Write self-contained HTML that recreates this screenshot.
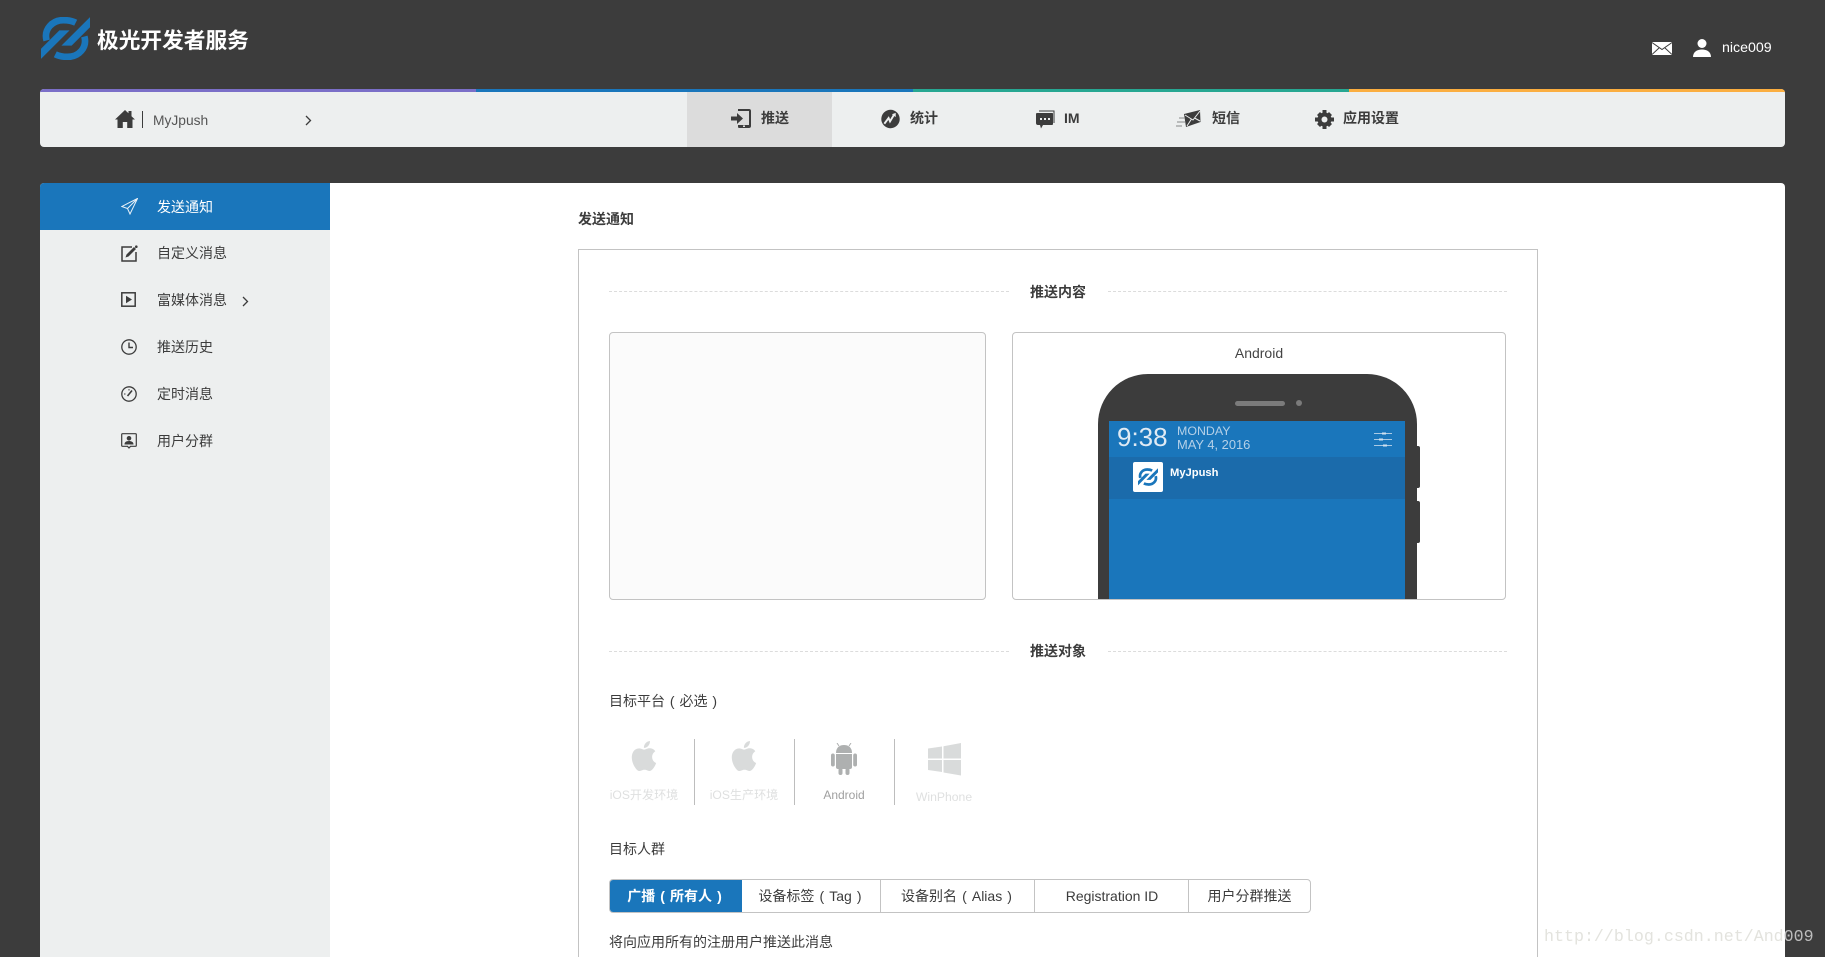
<!DOCTYPE html>
<html lang="zh">
<head>
<meta charset="utf-8">
<title>极光开发者服务</title>
<style>
*{box-sizing:border-box;margin:0;padding:0}
html,body{width:1825px;height:957px;overflow:hidden;background:#3c3c3c}
body{position:relative;font-family:"Liberation Sans","Noto Sans CJK SC",sans-serif;font-size:14px;color:#3c3c3c}
.a{position:absolute;white-space:nowrap}
.t{position:absolute;white-space:nowrap;line-height:20px;height:20px}
svg{position:absolute;display:block}
.m{font-weight:700}
.c{text-align:center}
.seg{position:absolute;top:0;height:100%;display:flex;align-items:center;justify-content:center;white-space:pre;border-left:1px solid #c3c3c3;word-spacing:1.200px}
</style>
</head>
<body>
<svg width="0" height="0" style="position:absolute">
<symbol id="logo" viewBox="0 0 48 42">
<path d="M0 41V31L18 13H28Z"/><path d="M48 0V10L30 28H20Z"/>
<path d="M5.500 23C2.500 12 11 3 22 3C27 3 31 4 34 5.500" fill="none" stroke="currentColor" stroke-width="6.500"/>
<path d="M42.500 19C45.500 30 37 39 26 39C21 39 17 38 14 36.500" fill="none" stroke="currentColor" stroke-width="6.500"/>
</symbol>
</svg>

<!-- header -->
<svg style="left:41px;top:17px;color:#1a76bb;fill:#1a76bb" width="49" height="43"><use href="#logo"/></svg>
<div class="t" style="left:97px;top:27px;height:26px;line-height:27px;font-size:21.700px;font-weight:700;color:#fff">极光开发者服务</div>

<svg style="left:1652px;top:42px" width="20" height="13" viewBox="0 0 20 13"><path fill="#fff" d="M0 0H20V13H0Z"/><path d="M0 .5L10 7.500L20 .5M0 12.500L7 6M20 12.500L13 6" fill="none" stroke="#3c3c3c" stroke-width="1"/></svg>
<svg style="left:1693px;top:39px" width="18" height="18" viewBox="0 0 18 18"><circle cx="9" cy="4.500" r="4.500" fill="#fff"/><path fill="#fff" d="M0 18C0 13 4 10.500 9 10.500S18 13 18 18Z"/></svg>
<div class="t" style="left:1722px;top:38px;color:#fff;font-size:14.200px">nice009</div>

<!-- top nav -->
<div class="a" style="left:40px;top:89px;width:1745px;height:58px;background:#edefef;border-radius:4px;overflow:hidden">
  <div class="a" style="left:0;top:0;width:436px;height:3px;background:#7b6fc8"></div>
  <div class="a" style="left:436px;top:0;width:437px;height:3px;background:#1a76bb"></div>
  <div class="a" style="left:873px;top:0;width:436px;height:3px;background:#27a792"></div>
  <div class="a" style="left:1309px;top:0;width:436px;height:3px;background:#fbae40"></div>
  <div class="a" style="left:647px;top:3px;width:145px;height:55px;background:#dcdcdc"></div>
</div>
<svg style="left:115px;top:110px" width="20" height="18" viewBox="0 0 20 18"><path fill="#3c3c3c" d="M10 0L13.500 3.300V1H16.500V6.200L20 9.500H17.500V18H12.200V12H7.800V18H2.500V9.500H0Z"/></svg>
<div class="a" style="left:142px;top:111px;width:1px;height:17px;background:#3c3c3c"></div>
<div class="t" style="left:153px;top:111px;color:#555;font-size:13.800px">MyJpush</div>
<svg style="left:305px;top:115px" width="7" height="11" viewBox="0 0 7 11"><path d="M1 1L5.500 5.500L1 10" fill="none" stroke="#3c3c3c" stroke-width="1.300"/></svg>

<svg style="left:731px;top:109px" width="20" height="20" viewBox="0 0 20 20"><path fill="#3c3c3c" d="M7 0H18Q20 0 20 2V17Q20 19 18 19H8Q7 19 7 17.500V16H9V16H18V2H7Z"/><rect x="12" y="16.500" width="2" height="1.500" fill="#dcdcdc"/><path fill="#3c3c3c" d="M0 7.500H6V4L12 9.500L6 15V11.500H0Z"/></svg>
<div class="t m" style="left:761px;top:108px">推送</div>

<svg style="left:881px;top:109px" width="19" height="20" viewBox="0 0 20 20"><circle cx="10" cy="10" r="9.700" fill="#3c3c3c"/><path d="M3.500 15L8 9L9.500 12.500L14 5" fill="none" stroke="#edefef" stroke-width="2"/><path fill="#edefef" d="M11.500 5L15.500 3.500L15.500 8Z"/></svg>
<div class="t m" style="left:910px;top:108px">统计</div>

<svg style="left:1036px;top:110px" width="19" height="19" viewBox="0 0 19 19"><path d="M3 1H18V13" fill="none" stroke="#3c3c3c" stroke-width="1"/><path fill="#3c3c3c" d="M1 3H16.500Q17 3 17 4V14Q17 15 16 15H7L5 18.500L4 15H2Q0 15 0 13V4Q0 3 1 3Z"/><path d="M4 9H6M8 9H10M12 9H14" stroke="#edefef" stroke-width="2"/></svg>
<div class="t m" style="left:1064px;top:108px">IM</div>

<svg style="left:1176px;top:110px" width="25" height="18" viewBox="0 0 25 18"><path fill="#3c3c3c" d="M8 4L24 0L24.500 12L10 17Z"/><path d="M9 5L17 10L24 1M11 16L15.500 9M24 11L18.500 8" fill="none" stroke="#edefef" stroke-width="1"/><path d="M3 8H9M1 12H9M0 16H6" fill="none" stroke="#888" stroke-width="1"/></svg>
<div class="t m" style="left:1212px;top:108px">短信</div>

<svg style="left:1315px;top:110px" width="19" height="19" viewBox="0 0 19 19"><g fill="#3c3c3c"><circle cx="9.500" cy="9.500" r="7"/><path d="M7.500 0H11.500V4H7.500ZM7.500 15H11.500V19H7.500ZM0 7.500H4V11.500H0ZM15 7.500H19V11.500H15Z"/><path d="M2 5L5 2L8 5L5 8ZM11 14L14 11L17 14L14 17ZM14 2L17 5L14 8L11 5ZM5 11L8 14L5 17L2 14Z"/></g><circle cx="9.500" cy="9.500" r="3" fill="#edefef"/></svg>
<div class="t m" style="left:1343px;top:108px">应用设置</div>

<!-- sidebar -->
<div class="a" style="left:40px;top:183px;width:290px;height:774px;background:#edefef;border-top-left-radius:4px;overflow:hidden">
  <div class="a" style="left:0;top:0;width:290px;height:47px;background:#1a76bb"></div>
</div>
<svg style="left:121px;top:198px" width="17" height="17" viewBox="0 0 17 17"><path d="M16.500 .5L.8 8.500L6.500 10.500L9 16L16.500 .5ZM6.500 10.500L16.500 .5" fill="none" stroke="#e8f1f8" stroke-width="1"/></svg>
<div class="t" style="left:157px;top:197px;color:#fff">发送通知</div>

<svg style="left:121px;top:245px" width="17" height="17" viewBox="0 0 17 17"><path d="M11 2H1V16H15V7" fill="none" stroke="#3c3c3c" stroke-width="1.500"/><path fill="#3c3c3c" d="M4.500 12.500L5.500 9.500L13 2L15 4L7.500 11.500Z"/><circle cx="15.300" cy="1.700" r="1.300" fill="#3c3c3c"/></svg>
<div class="t" style="left:157px;top:243px">自定义消息</div>

<svg style="left:121px;top:292px" width="15" height="15" viewBox="0 0 15 15"><rect x=".8" y=".8" width="13.400" height="13.400" fill="none" stroke="#3c3c3c" stroke-width="1.500"/><path fill="#3c3c3c" d="M5 3.800L11 7.500L5 11.200Z"/></svg>
<div class="t" style="left:157px;top:290px">富媒体消息</div>
<svg style="left:242px;top:296px" width="7" height="11" viewBox="0 0 7 11"><path d="M1 1L5.500 5.500L1 10" fill="none" stroke="#3c3c3c" stroke-width="1.300"/></svg>

<svg style="left:121px;top:339px" width="16" height="16" viewBox="0 0 16 16"><circle cx="8" cy="8" r="7.200" fill="none" stroke="#3c3c3c" stroke-width="1.300"/><path d="M8 3.500V8.500H12" fill="none" stroke="#3c3c3c" stroke-width="1.400"/></svg>
<div class="t" style="left:157px;top:337px">推送历史</div>

<svg style="left:121px;top:386px" width="16" height="16" viewBox="0 0 16 16"><circle cx="8" cy="8" r="7.200" fill="none" stroke="#3c3c3c" stroke-width="1.300"/><path d="M6.500 10L11 4.500" fill="none" stroke="#3c3c3c" stroke-width="1.600"/><path d="M3 8H4.500M8 3V4.500" stroke="#3c3c3c" stroke-width="1"/></svg>
<div class="t" style="left:157px;top:384px">定时消息</div>

<svg style="left:121px;top:433px" width="16" height="16" viewBox="0 0 16 16"><path d="M1.500 .7H14.500Q15.300 .7 15.300 1.500V12.500Q15.300 13.300 14.500 13.300H9.500L8 15L6.500 13.300H1.500Q.7 13.300 .7 12.500V1.500Q.7 .7 1.500 .7Z" fill="none" stroke="#3c3c3c" stroke-width="1.200"/><circle cx="8" cy="5.300" r="2.300" fill="#3c3c3c"/><path fill="#3c3c3c" d="M3.500 11.500C3.500 9 5.500 8 8 8S12.500 9 12.500 11.500Z"/></svg>
<div class="t" style="left:157px;top:431px">用户分群</div>

<!-- main -->
<div class="a" style="left:330px;top:183px;width:1455px;height:774px;background:#fff;border-top-right-radius:4px"></div>
<div class="t m" style="left:578px;top:209px">发送通知</div>
<div class="a" style="left:578px;top:249px;width:960px;height:720px;border:1px solid #c3c3c3"></div>

<div class="a" style="left:609px;top:291px;width:400px;border-top:1px dashed #dcdcdc"></div>
<div class="a" style="left:1108px;top:291px;width:399px;border-top:1px dashed #dcdcdc"></div>
<div class="t m" style="left:1030px;top:282px">推送内容</div>

<div class="a" style="left:609px;top:332px;width:377px;height:268px;background:#fbfbfb;border:1px solid #c3c3c3;border-radius:4px"></div>
<div class="a" style="left:1012px;top:332px;width:494px;height:268px;background:#fff;border:1px solid #c3c3c3;border-radius:4px"></div>
<div class="t c" style="left:1012px;width:494px;top:343px;color:#444">Android</div>

<!-- phone -->
<div class="a" style="left:1098px;top:374px;width:319px;height:225px;background:#3c3c3c;border-radius:50px 50px 0 0"></div>
<div class="a" style="left:1417px;top:446px;width:3px;height:42px;background:#3c3c3c;border-radius:0 2px 2px 0"></div>
<div class="a" style="left:1417px;top:501px;width:3px;height:42px;background:#3c3c3c;border-radius:0 2px 2px 0"></div>
<div class="a" style="left:1235px;top:401px;width:50px;height:5px;background:#7b7b7b;border-radius:3px"></div>
<div class="a" style="left:1296px;top:400px;width:6px;height:6px;background:#7b7b7b;border-radius:50%"></div>
<div class="a" style="left:1109px;top:421px;width:296px;height:178px;background:#1a76bb"></div>
<div class="a" style="left:1109px;top:457px;width:296px;height:42px;background:#1b6bab"></div>
<div class="a" style="left:1117px;top:422px;line-height:30px;font-size:26px;color:#dfeaf4">9:38</div>
<div class="a" style="left:1177px;top:423px;line-height:16px;font-size:12.400px;color:#b4d0e8">MONDAY</div>
<div class="a" style="left:1177px;top:437px;line-height:16px;font-size:12.900px;color:#b4d0e8">MAY 4, 2016</div>
<svg style="left:1374px;top:431px" width="18" height="16" viewBox="0 0 18 16"><path d="M0 2.500H18M0 8.500H18M0 14.500H18" stroke="#cfe0ef" stroke-width="1" opacity=".8"/><path d="M8 1.500H12V3.500H8ZM5 7.500H9V9.500H5ZM9 13.500H13V15.500H9Z" fill="#cfe0ef"/></svg>
<div class="a" style="left:1133px;top:462px;width:30px;height:30px;background:#fff;border-radius:2px"></div>
<svg style="left:1138px;top:468px;color:#1a76bb;fill:#1a76bb" width="20" height="18"><use href="#logo"/></svg>
<div class="a" style="left:1170px;top:466px;line-height:15px;font-size:11.200px;font-weight:700;color:#fff">MyJpush</div>

<div class="a" style="left:609px;top:651px;width:400px;border-top:1px dashed #dcdcdc"></div>
<div class="a" style="left:1108px;top:651px;width:399px;border-top:1px dashed #dcdcdc"></div>
<div class="t m" style="left:1030px;top:641px">推送对象</div>

<div class="t" style="left:609px;top:691px;word-spacing:1px">目标平台 ( 必选 )</div>

<!-- platforms -->
<div class="a" style="left:694px;top:739px;width:1px;height:66px;background:#bdbdbd"></div>
<div class="a" style="left:794px;top:739px;width:1px;height:66px;background:#bdbdbd"></div>
<div class="a" style="left:894px;top:739px;width:1px;height:66px;background:#bdbdbd"></div>
<svg style="left:626px;top:738px" width="36" height="36" viewBox="0 0 24 24"><path fill="#d9dbdb" d="M18.700 19.500c-.83 1.240-1.710 2.450-3.050 2.470-1.340.03-1.770-.79-3.290-.79-1.530 0-2 .77-3.270.82-1.310.05-2.300-1.320-3.140-2.530C4.250 17 2.940 12.450 4.700 9.390c.87-1.520 2.430-2.480 4.120-2.510 1.280-.02 2.500.87 3.290.87.78 0 2.260-1.070 3.810-.91.65.03 2.470.26 3.640 1.980-.09.06-2.170 1.280-2.150 3.810.03 3.020 2.650 4.030 2.680 4.040-.03.07-.42 1.440-1.380 2.830M13 3.500c.73-.83 1.940-1.460 2.940-1.500.13 1.170-.34 2.350-1.040 3.190-.69.85-1.830 1.510-2.950 1.420-.15-1.150.41-2.350 1.050-3.110z"/></svg>
<svg style="left:726px;top:738px" width="36" height="36" viewBox="0 0 24 24"><path fill="#d9dbdb" d="M18.700 19.500c-.83 1.240-1.710 2.450-3.050 2.470-1.340.03-1.770-.79-3.290-.79-1.530 0-2 .77-3.270.82-1.310.05-2.300-1.320-3.140-2.530C4.250 17 2.940 12.450 4.700 9.390c.87-1.520 2.430-2.480 4.120-2.510 1.280-.02 2.500.87 3.290.87.78 0 2.260-1.070 3.810-.91.65.03 2.470.26 3.640 1.980-.09.06-2.170 1.280-2.150 3.810.03 3.020 2.650 4.030 2.680 4.040-.03.07-.42 1.440-1.380 2.830M13 3.500c.73-.83 1.940-1.460 2.940-1.500.13 1.170-.34 2.350-1.040 3.190-.69.85-1.830 1.510-2.950 1.420-.15-1.150.41-2.350 1.050-3.110z"/></svg>
<svg style="left:831px;top:743px" width="26" height="32" viewBox="0 0 26 32"><g fill="#aeb0b0"><path d="M5 10C5 4 9 2 13 2S21 4 21 10Z"/><path d="M5 11H21V24Q21 26 19 26H7Q5 26 5 24Z"/><rect x="0" y="10.500" width="3.800" height="13" rx="1.900"/><rect x="22.200" y="10.500" width="3.800" height="13" rx="1.900"/><rect x="7.500" y="25" width="4" height="7" rx="2"/><rect x="14.500" y="25" width="4" height="7" rx="2"/></g><path d="M8 3L6 0M18 3L20 0" stroke="#aeb0b0" stroke-width="1"/></svg>
<svg style="left:928px;top:743px" width="33" height="33" viewBox="0 0 33 33"><path fill="#d9dbdb" d="M0 5.500L14 3.500V15.500H0ZM15.500 3.200L33 0V15.500H15.500ZM0 17H14V29L0 27ZM15.500 17H33V32.500L15.500 29.500Z"/></svg>
<div class="t c" style="left:601px;width:86px;top:785px;font-size:12.100px;color:#dfe0e0">iOS开发环境</div>
<div class="t c" style="left:701px;width:86px;top:785px;font-size:12.100px;color:#dfe0e0">iOS生产环境</div>
<div class="t c" style="left:801px;width:86px;top:785px;font-size:12px;color:#9f9f9f">Android</div>
<div class="t c" style="left:901px;width:86px;top:787px;font-size:12.200px;color:#dfe0e0">WinPhone</div>

<div class="t" style="left:609px;top:839px">目标人群</div>

<div class="a" style="left:609px;top:879px;width:702px;height:34px;border:1px solid #c3c3c3;border-radius:4px;overflow:hidden">
  <div class="seg m" style="left:0;width:132px;background:#1a76bb;color:#fff;border-left:0;padding-right:3px">广播 ( 所有人 )</div>
  <div class="seg" style="left:132px;width:139px;border-left:0;padding-right:3px">设备标签 ( Tag )</div>
  <div class="seg" style="left:270px;width:155px;padding-right:3px">设备别名 ( Alias )</div>
  <div class="seg" style="left:424px;width:155px;word-spacing:0">Registration ID</div>
  <div class="seg" style="left:578px;width:122px">用户分群推送</div>
</div>
<div class="t" style="left:609px;top:932px">将向应用所有的注册用户推送此消息</div>

<!-- watermark -->
<div class="a" style="left:1544px;top:927px;line-height:20px;font-family:'Liberation Mono',monospace;font-size:16.650px;color:#e3e3de">http://blog.csdn.net/And<span style="color:#bdbdbd">009</span></div>
</body>
</html>
